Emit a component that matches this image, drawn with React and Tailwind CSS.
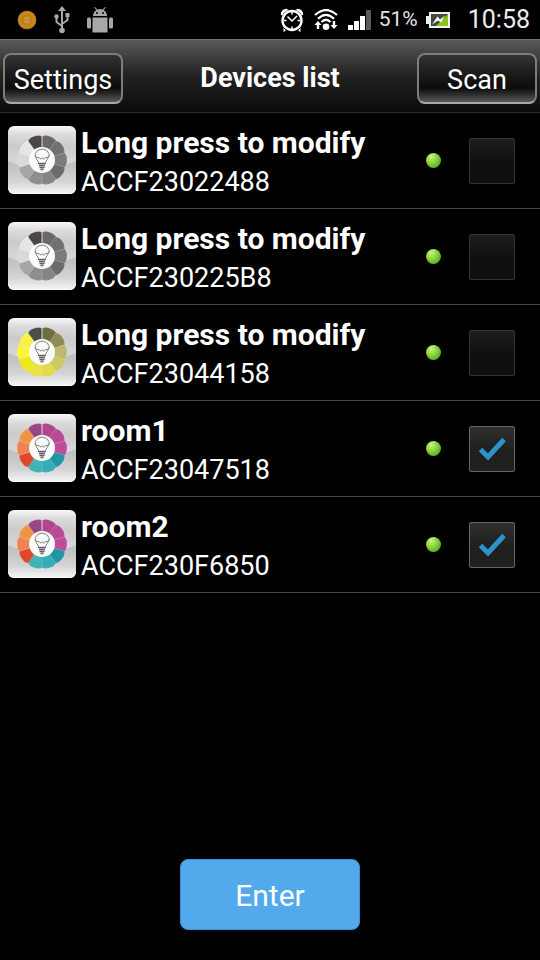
const devices = [
  { name: 'Long press to modify', mac: 'ACCF23022488', palette: 'gray', checked: false },
  { name: 'Long press to modify', mac: 'ACCF230225B8', palette: 'gray', checked: false },
  { name: 'Long press to modify', mac: 'ACCF23044158', palette: 'yellow', checked: false },
  { name: 'room1', mac: 'ACCF23047518', palette: 'color', checked: true },
  { name: 'room2', mac: 'ACCF230F6850', palette: 'color', checked: true },
]

// petal colours, clockwise from 12 o'clock
const palettes = {
  gray: ['#6b6866', '#72706f', '#7c7b7b', '#6c6a6a', '#858585', '#8e8e8e', '#a6a6a6', '#d9d9d9', '#e6e6e6', '#4b4645'],
  yellow: ['#6f6c42', '#8f8b55', '#bdb970', '#cdc863', '#e3da4d', '#ebe246', '#f0e61c', '#fbf43c', '#f8f04c', '#4c4d45'],
  color: ['#b0468f', '#b84a96', '#bd4d9a', '#2295a5', '#35adb4', '#3fb4b0', '#e0482a', '#ef8354', '#f09347', '#98458a'],
}

function PetalIcon({ palette }) {
  return (
    <svg viewBox="0 0 68 68" className="size-17 shrink-0" aria-hidden="true">
      <defs>
        <linearGradient id="tile" x1="0" y1="0" x2="0" y2="1">
          <stop offset="0" stopColor="#f8f8f8" />
          <stop offset="0.12" stopColor="#dcdcdc" />
          <stop offset="0.3" stopColor="#cbcbcb" />
          <stop offset="0.55" stopColor="#d8d8d8" />
          <stop offset="1" stopColor="#d8d8d8" />
        </linearGradient>
        <linearGradient id="tileLow" x1="0" y1="0" x2="0" y2="1">
          <stop offset="0" stopColor="#bdbdbd" />
          <stop offset="0.6" stopColor="#d2d2d2" />
          <stop offset="1" stopColor="#f6f6f6" />
        </linearGradient>
        <clipPath id="tileClip">
          <rect width="68" height="68" rx="6" />
        </clipPath>
      </defs>
      <g clipPath="url(#tileClip)">
        <rect width="68" height="68" fill="url(#tile)" />
        <path d="M0 35Q34 50 68 35V68H0Z" fill="url(#tileLow)" />
      </g>
      {palettes[palette].map((fill, i) => (
        <path
          key={i}
          d="M34 34L34 10.500Q35 9.300 39 9.500Q46 11 48 15Z"
          fill={fill}
          stroke="#ffffff"
          strokeOpacity="0.25"
          strokeWidth="0.4"
          transform={`rotate(${i * 36} 34 34)`}
        />
      ))}
      <path d="M34 9V22" stroke="#f0f0f0" strokeWidth="0.8" />
      <circle cx="34" cy="34" r="13" fill="#fafafa" />
      <g fill="none" stroke="#66666a" strokeWidth="0.8" strokeLinejoin="round">
        <path d="M30.500 38Q30.500 35 28.500 33Q26.500 30.500 27.300 27.500Q29 23.300 34 23Q39.500 23.300 41 27.500Q41.700 30.500 39.500 33Q37.500 35 37.500 38" />
        <path d="M27.500 29.500Q28.500 32.500 31 31.500Q32 34.500 34.500 32Q36.500 34.500 37.500 31.500Q40 32.500 41 29.500" />
      </g>
      <path d="M30.500 37.500h7M31 39.500h6M31.500 41.500h5M32.500 43.500h3" stroke="#606064" strokeWidth="1.400" />
    </svg>
  )
}

function NotificationIcons() {
  return (
    <div className="flex items-center gap-4">
      <svg viewBox="0 0 20 20" className="size-5" aria-hidden="true">
        <defs>
          <radialGradient id="coin">
            <stop offset="0" stopColor="#c99436" />
            <stop offset="0.5" stopColor="#bd7d14" />
            <stop offset="0.85" stopColor="#c98e2c" />
            <stop offset="1" stopColor="#7a500e" />
          </radialGradient>
        </defs>
        <circle cx="10" cy="10" r="9.500" fill="url(#coin)" />
        <path d="M7 9Q10 6 13 8M7 12Q10 14 13 11" fill="none" stroke="#d0a050" />
      </svg>
      <svg viewBox="0 0 18 28" className="h-7 w-[18px]" fill="none" stroke="#a8a8a8" strokeWidth="2" aria-hidden="true">
        <path d="M9 4V24M9 20L3.500 16V10M9 18L14.500 14V9" />
        <path d="M9 0L13 5H5ZM12.500 7h4v4h-4z" fill="#a8a8a8" stroke="none" />
        <circle cx="3.500" cy="10.500" r="2.200" fill="#a8a8a8" stroke="none" />
        <circle cx="9" cy="24.500" r="2.800" fill="#a8a8a8" stroke="none" />
      </svg>
      <svg viewBox="0 0 26 26" className="size-[26px]" fill="#a8a8a8" aria-hidden="true">
        <path d="M6 9Q6 5 9.500 3L7 0.500L7.800 0L10.500 2.500Q13 1.700 15.500 2.500L18.200 0L19 0.500L16.500 3Q20 5 20 9Z" />
        <path d="M5.500 10.500H20.500V25.500H5.500Z" />
        <rect x="0" y="10.500" width="4" height="11" rx="1.500" />
        <rect x="22" y="10.500" width="4" height="11" rx="1.500" />
        <circle cx="10" cy="6" r="1" fill="#000" />
        <circle cx="16" cy="6" r="1" fill="#000" />
      </svg>
    </div>
  )
}

function StatusBar() {
  return (
    <div className="flex h-[39px] items-center justify-between pr-2.5 pl-[17px]">
      <NotificationIcons />
      <div className="flex items-center">
        <svg viewBox="0 0 24 24" className="size-6" aria-hidden="true">
          <circle cx="12" cy="12.500" r="9.500" fill="none" stroke="#fff" strokeWidth="2.400" />
          <path d="M0.800 6.500Q1 1.500 6.500 0.800L8.500 2Q4 3.500 2.200 7.800ZM23.200 6.500Q23 1.500 17.500 0.800L15.500 2Q20 3.500 21.800 7.800ZM3.500 20L6 22.500L3.500 24ZM20.500 20L18 22.500L20.500 24Z" fill="#fff" />
          <path d="M7.500 8.500L12 13L17 8M12 4v2.500M12 18.500V21M4 12.500h2.500M17.500 12.500H20" fill="none" stroke="#fff" strokeWidth="1.500" />
        </svg>
        <svg viewBox="0 0 24 22" className="ml-2.5 h-[22px] w-6" fill="none" stroke="#fff" strokeWidth="2.200" aria-hidden="true">
          <path d="M1 6Q12 -4 23 6M4 9.800Q12 2 20 9.800M7.500 13Q12 8.500 16.500 13" />
          <circle cx="12" cy="17.800" r="3.300" fill="#fff" stroke="none" />
          <path d="M4 12L7.500 16H5.200V20H2.800V16H0.500ZM20 20L16.500 16H18.800V12H21.200V16H23.500Z" fill="#fff" stroke="none" />
        </svg>
        <svg viewBox="0 0 23 20" className="ml-2.5 h-5 w-[23px]" fill="#fff" aria-hidden="true">
          <path d="M0 15h5v5H0zM6 11h5v9H6zM12 6h5v14h-5z" />
          <path d="M18 0h5v20h-5z" fill="#5a5a5a" />
        </svg>
        <span className="ml-2 text-[21px] text-[#e4e4e4]">51%</span>
        <svg viewBox="0 0 24 18" className="ml-2 h-[18px] w-6" aria-hidden="true">
          <path d="M3 1H24V17H3V13H0V5H3Z" fill="#f0f0f0" />
          <path d="M5 3H22V15H5Z" fill="#444941" />
          <path d="M22 3V15H10Z" fill="#86c418" />
          <path d="M6 13.500L11.500 5.500L14 8.500L19 4.500L15 11.500L12 9.500Z" fill="#fff" />
        </svg>
        <time className="ml-[18px] text-[25px] text-[#ededed]">10:58</time>
      </div>
    </div>
  )
}

function HeaderButton({ children }) {
  return (
    <button
      type="button"
      className="h-[51px] w-[120px] rounded-lg border-2 border-[#7c7c7c] border-b-[#a8a8a8] bg-linear-to-b from-[#333] via-[#0c0c0c] via-70% to-[#5a5a5a] pt-1 text-[27px] text-white"
    >
      {children}
    </button>
  )
}

function DeviceRow({ device }) {
  return (
    <li className="flex h-24 items-center border-b border-[#4a4a4a] pr-[25px] pb-px pl-2">
      <PetalIcon palette={device.palette} />
      <label htmlFor={device.mac} className="ml-[5px] min-w-0 flex-1 pt-1">
        <span className="block text-[30px] leading-10 font-bold">{device.name}</span>
        <span className="block text-[27px] leading-[38px]">{device.mac}</span>
      </label>
      <span className="size-[15px] shrink-0 rounded-full bg-radial-[at_35%_25%] from-[#c8f088] via-[#7ccc30] via-50% to-[#3d8f0c]" />
      <span className="ml-7 grid shrink-0 pt-0.5">
        <input
          id={device.mac}
          type="checkbox"
          defaultChecked={device.checked}
          className="peer col-start-1 row-start-1 size-[46px] appearance-none rounded-xs border border-[#333] bg-linear-to-b from-[#1e1e1e] to-[#101010] to-50% checked:border-[#666] checked:from-[#303030] checked:to-[#202020]"
        />
        <svg
          viewBox="0 0 46 46"
          className="pointer-events-none invisible col-start-1 row-start-1 size-[46px] peer-checked:visible"
          aria-hidden="true"
        >
          <path d="M11.500 23.500L19 31L35 13.500" fill="none" stroke="#2c93c8" strokeWidth="5" />
        </svg>
      </span>
    </li>
  )
}

export default function App() {
  return (
    <div className="flex min-h-screen flex-col bg-black font-[Roboto,sans-serif] text-white">
      <StatusBar />
      <header className="flex h-[74px] items-center justify-between border-t border-b border-t-[#707070] border-b-[#2c2c2c] bg-linear-to-b from-[#5a5a5a] via-[#222] via-50% to-[#0c0c0c] px-[3px] pt-1">
        <HeaderButton>Settings</HeaderButton>
        <h1 className="text-[27px] font-bold">Devices list</h1>
        <HeaderButton>Scan</HeaderButton>
      </header>
      <ul>
        {devices.map((device) => (
          <DeviceRow key={device.mac} device={device} />
        ))}
      </ul>
      <div className="mt-auto flex justify-center pt-6 pb-[30px]">
        <button
          type="button"
          className="h-[71px] w-[180px] rounded-lg border border-[#3c8fcf] bg-[#52aaec] pt-0.5 text-[30px]"
        >
          Enter
        </button>
      </div>
    </div>
  )
}
